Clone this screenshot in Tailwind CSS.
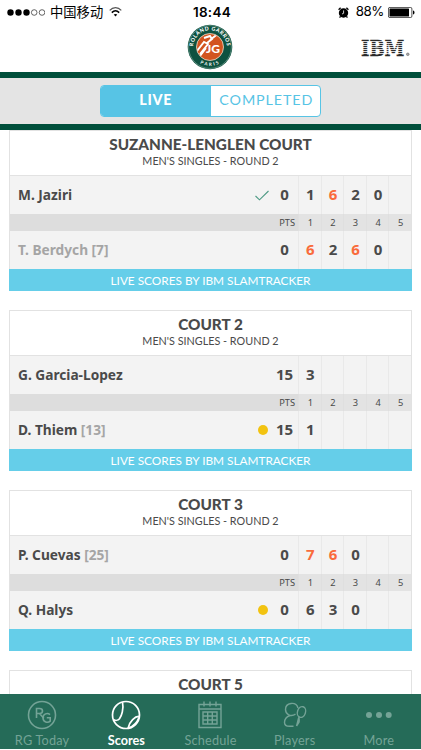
<!DOCTYPE html>
<html lang="en">
<head>
  <meta charset="UTF-8">
  <meta name="viewport" content="width=device-width, initial-scale=1.0">
  <title>Roland Garros - Live Scores</title>
  <script src="https://cdn.jsdelivr.net/npm/@tailwindcss/browser@4"></script>
</head>
<body class="bg-white font-['Lato','Noto_Sans_CJK_SC',sans-serif] text-[#4a4a4a]">
  <div class="w-[421px] h-[750px] overflow-hidden flex flex-col">

    <!-- Status bar -->
    <div class="h-6 shrink-0 grid grid-cols-3 items-center px-[7px] text-black">
      <div class="flex items-center">
        <svg class="w-[38px] h-[7px]" viewBox="0 0 38 7">
          <circle cx="3.5" cy="3.5" r="3.2"/>
          <circle cx="11.5" cy="3.5" r="3.2"/>
          <circle cx="19.5" cy="3.5" r="3.2"/>
          <circle cx="27.2" cy="3.5" r="2.8" fill="none" stroke="black" stroke-width=".6"/>
          <circle cx="35" cy="3.5" r="2.8" fill="none" stroke="black" stroke-width=".6"/>
        </svg>
        <span class="ml-[5px] text-[13.3px] leading-6 whitespace-nowrap font-['Noto_Sans_CJK_SC',sans-serif]">中国移动</span>
        <svg class="ml-[6px] w-[13px] h-[10px] shrink-0" viewBox="0 0 13 10" fill="none" stroke="black" stroke-width="1.5">
          <path d="M.7 3.4C4-.2 9-.2 12.3 3.4" stroke="#555" stroke-width="1.2"/>
          <path d="M2.8 5.6c2.2-2.2 5.2-2.2 7.4 0"/>
          <path d="M4.7 7.6 6.5 9.5 8.3 7.6c-1-.9-2.6-.9-3.6 0z" fill="black" stroke="none"/>
        </svg>
      </div>
      <span class="pl-[3px] text-center text-[13.5px] font-semibold font-['Inter',sans-serif] tracking-[.3px]">18:44</span>
      <div class="flex items-center justify-end -mr-[1px]">
        <svg class="w-[11px] h-[11px]" viewBox="0 0 11 11">
          <circle cx="5.5" cy="6" r="4.7"/>
          <path d="M.6 2.8 2.6.8M10.4 2.8 8.4.8M2.5 9.4l-.9 1.2M8.5 9.4l.9 1.2" stroke="black" stroke-width="1.3"/>
          <path d="M5.6 3.4v2.9L4 7" fill="none" stroke="white" stroke-width=".8"/>
        </svg>
        <span class="ml-[7px] text-[13.3px] font-['Inter',sans-serif] tracking-[-.4px]">88%</span>
        <svg class="ml-[4px] w-[27px] h-[11px]" viewBox="0 0 27 11">
          <rect x=".4" y=".4" width="23.5" height="10.2" rx="1.5" fill="none" stroke="black" stroke-width=".7"/>
          <rect x="1.5" y="1.5" width="19.5" height="8" rx=".5"/>
          <path d="M25 3.5c2 .5 2 3.5 0 4z"/>
        </svg>
      </div>
    </div>

    <!-- Logos -->
    <header class="h-12 shrink-0 grid grid-cols-3 items-start">
      <span></span>
      <svg class="justify-self-center w-[46px] h-[46px]" viewBox="0 0 46 46">
        <defs>
          <path id="ring-top" d="M8.500 31.500A16.8 16.8 0 1 1 37.500 31.500"/>
          <path id="ring-bottom" d="M5.500 31A19.6 19.6 0 0 0 40.500 31"/>
          <clipPath id="ball"><circle cx="23" cy="23" r="13"/></clipPath>
        </defs>
        <circle cx="23" cy="23" r="22.3" fill="#0e5240"/>
        <circle cx="23" cy="23" r="21.4" fill="none" stroke="#7fa79a" stroke-width=".6"/>
        <circle cx="23" cy="23" r="13.5" fill="#d2541f" stroke="#e8e0d0" stroke-width=".8"/>
        <g clip-path="url(#ball)" stroke="white" fill="none">
          <path d="M10 27 17 18l4 2-8 10M13 32l6-8M23 16l9-7M17 14l6-2 2 3-5 4" stroke-width="1.9"/>
        </g>
        <text x="19" y="29" font-family="Lato" font-weight="900" font-size="11.5" fill="white" textLength="14" lengthAdjust="spacingAndGlyphs">JG</text>
        <text font-family="Lato" font-weight="900" font-size="5.2" fill="white" letter-spacing=".55"><textPath href="#ring-top" startOffset="50%" text-anchor="middle">ROLAND GARROS</textPath></text>
        <text font-family="Lato" font-weight="700" font-size="4.5" fill="white" letter-spacing="1.8"><textPath href="#ring-bottom" startOffset="51%" text-anchor="middle">PARIS</textPath></text>
      </svg>
      <svg class="justify-self-end mr-[11px] mt-[15px] w-[49px] h-[18px] overflow-visible" viewBox="0 0 49 18">
        <text x="0" y="17" font-family="DejaVu Serif" font-weight="700" font-size="22.500" fill="#2a2a2a" stroke="#2a2a2a" stroke-width=".4" textLength="43.500" lengthAdjust="spacingAndGlyphs">IBM</text>
        <path d="M-1 2.5h46M-1 4.500h46M-1 6.500h46M-1 8.500h46M-1 10.500h46M-1 12.500h46M-1 14.500h46" stroke="white" stroke-width=".8"/>
        <circle cx="46.8" cy="15.3" r="1.3" fill="#aaa" stroke="#666" stroke-width=".6"/>
      </svg>
    </header>

    <!-- Live / completed switch -->
    <div class="h-[58px] shrink-0 border-y-[6.5px] border-[#004f3b] bg-[#e4e4e4] flex justify-center items-center">
      <div class="w-[221px] h-8 -mt-px flex rounded-[4px] border border-[#57c4e5] overflow-hidden bg-white text-[14.3px] leading-[28px] text-center">
        <span class="w-1/2 bg-[#57c4e5] text-white font-black tracking-[.7px]">LIVE</span>
        <span class="w-1/2 pl-[2px] text-[#57c4e5] tracking-[.9px]">COMPLETED</span>
      </div>
    </div>

    <!-- Match cards -->
    <main id="matches" class="flex-1 min-h-0 overflow-hidden flex flex-col gap-[19px] px-[9px]"></main>

    <!-- Tab bar -->
    <nav class="h-[55.5px] mb-px shrink-0 bg-[#256b58] grid grid-cols-5 text-[12.7px] leading-[15px] tracking-[.2px] text-[#74a396]">
      <a class="flex flex-col items-center pt-[6px]">
        <svg class="w-[30px] h-[30px]" viewBox="0 0 30 30" fill="none" stroke="currentColor">
          <circle cx="15" cy="15" r="13.5" stroke-width="1.6"/>
          <path d="M9.5 18V8.5h3c4 0 4 5 0 5h-3M12.5 13.5l4.3 4.8" stroke-width="1.6"/>
          <path d="M23 14.6c-2.5-2.2-7-.8-7 3.2 0 4.6 5 5.5 7.2 3.3v-3.3h-3.4" stroke-width="1.6"/>
        </svg>
        <span class="mt-[3px]">RG Today</span>
      </a>
      <a class="flex flex-col items-center pt-[6px] text-white font-bold tracking-normal">
        <svg class="w-[30px] h-[30px]" viewBox="0 0 30 30" fill="none" stroke="currentColor" stroke-width="1.7">
          <circle cx="15" cy="15" r="13.5"/>
          <path d="M11.5 2.1C13 9 10.500 16 8.500 18.800 7 20.800 4 20.500 2.300 19.500"/>
          <path d="M28.300 16.500c-4-.5-10 5-11.300 11.800M28 17.500c-1.500 4-5 8.500-10.500 10.600"/>
        </svg>
        <span class="mt-[3px]">Scores</span>
      </a>
      <a class="flex flex-col items-center pt-[6px]">
        <svg class="w-[30px] h-[30px]" viewBox="0 0 30 30" fill="none" stroke="currentColor" stroke-width="1.4">
          <path d="M4 4.500h22v23H4zM4 9h22M9 1.500v5M15 1.500v5M21 1.500v5"/>
          <path d="M8 12h14v12H8zM8 16h14M8 20h14M12.700 12v12M17.300 12v12"/>
        </svg>
        <span class="mt-[3px]">Schedule</span>
      </a>
      <a class="flex flex-col items-center pt-[6px]">
        <svg class="w-[30px] h-[30px]" viewBox="0 0 30 30" fill="none" stroke="currentColor" stroke-width="1.4">
          <path d="M15.500 14.200C10.500 17.500 5.500 14 5.500 9.500c0-7 10.500-8.500 12.500-1.500"/>
          <path d="M10 15.500c-4 1.500-5.500 4-5.500 7 0 2.500 1.500 3.800 5 3.800h4"/>
          <ellipse cx="21.500" cy="12" rx="4" ry="5.500" transform="rotate(18 21.500 12)"/>
          <path d="M19 17.200c-1 1.500-1 4-2.500 8.800M19 17.200c0 2 .5 3.500 0 5l-2.500 3.800"/>
        </svg>
        <span class="mt-[3px]">Players</span>
      </a>
      <a class="flex flex-col items-center pt-[6px]">
        <svg class="w-[30px] h-[30px]" viewBox="0 0 30 30" fill="currentColor">
          <circle cx="5" cy="15" r="3"/>
          <circle cx="15" cy="15" r="3"/>
          <circle cx="24.700" cy="15" r="3"/>
        </svg>
        <span class="mt-[3px]">More</span>
      </a>
    </nav>
  </div>

  <script>
    // A score written as "6*" is a set that the player has won
    const matches = [
      { court: "SUZANNE-LENGLEN COURT", players: [
        { name: "M. Jaziri", mark: "check", pts: "0", sets: ["1", "6*", "2", "0", ""] },
        { name: "T. Berdych", seed: "[7]", muted: true, pts: "0", sets: ["6*", "2", "6*", "0", ""] },
      ]},
      { court: "COURT 2", players: [
        { name: "G. Garcia-Lopez", pts: "15", sets: ["3", "", "", "", ""] },
        { name: "D. Thiem", seed: "[13]", mark: "serve", pts: "15", sets: ["1", "", "", "", ""] },
      ]},
      { court: "COURT 3", players: [
        { name: "P. Cuevas", seed: "[25]", pts: "0", sets: ["7*", "6*", "0", "", ""] },
        { name: "Q. Halys", mark: "serve", pts: "0", sets: ["6", "3", "0", "", ""] },
      ]},
      { court: "COURT 5", players: [] },
    ];

    const marks = {
      check: `<svg class="w-[14px] h-[11px]" viewBox="0 0 14 11" fill="none" stroke="#4d9a84" stroke-width="1.1"><path d="M.5 6 4.500 9.800 13.500 1"/></svg>`,
      serve: `<span class="w-[10px] h-[10px] mr-[1px] rounded-full bg-[#f2c311]"></span>`,
    };

    function playerRow(p) {
      const cells = p.sets.map(s => `
        <span class="border-l border-[#e9e9e9] pl-px text-center ${s.endsWith("*") ? "text-[#f96b3c]" : ""}">${s.replace("*", "")}</span>`).join("");
      return `
        <div class="h-[37.6px] overflow-hidden grid grid-cols-[1fr_20px_29px_repeat(5,22.6px)] bg-[#f3f3f3] text-[15px] leading-[37px] font-bold font-['Noto_Sans',sans-serif]">
          <span class="pl-2 text-[13.7px] ${p.muted ? "text-[#a5a5a5]" : ""}">${p.name} <span class="text-[#a5a5a5]">${p.seed || ""}</span></span>
          <span class="flex items-center justify-end">${p.mark ? marks[p.mark] : ""}</span>
          <span class="pl-[2px] text-center">${p.pts}</span>${cells}
        </div>`;
    }

    function card(m) {
      const [a, b] = m.players;
      const setNumbers = [1, 2, 3, 4, 5].map(n => `<span class="border-l border-[#dfdfdf] bg-[#e3e3e3] pl-px text-center">${n}</span>`).join("");
      const body = a ? `
        ${playerRow(a)}
        <div class="h-[17.6px] grid grid-cols-[1fr_29px_repeat(5,22.6px)] bg-[#dddddd] text-[9.3px] leading-[17px] font-['Noto_Sans',sans-serif]">
          <span></span><span class="text-right pr-[3px] -ml-2">PTS</span>${setNumbers}
        </div>
        ${playerRow(b)}
        <div class="h-[21.8px] -mx-px bg-[#65cee9] text-white text-center text-[11.8px] leading-[23px]">LIVE SCORES BY IBM SLAMTRACKER</div>` : "";
      return `
        <section class="shrink-0 border border-b-0 border-[#e2e2e2] text-center">
          <div class="h-[45.3px] border-b border-[#e2e2e2] pt-[4px]">
            <h2 class="text-[15.3px] leading-[18px] font-black">${m.court}</h2>
            <p class="text-[10.8px] leading-[15px]">MEN'S SINGLES - ROUND 2</p>
          </div>
          <div class="text-left">${body}</div>
        </section>`;
    }

    document.getElementById("matches").innerHTML = matches.map(card).join("");
  </script>
</body>
</html>
